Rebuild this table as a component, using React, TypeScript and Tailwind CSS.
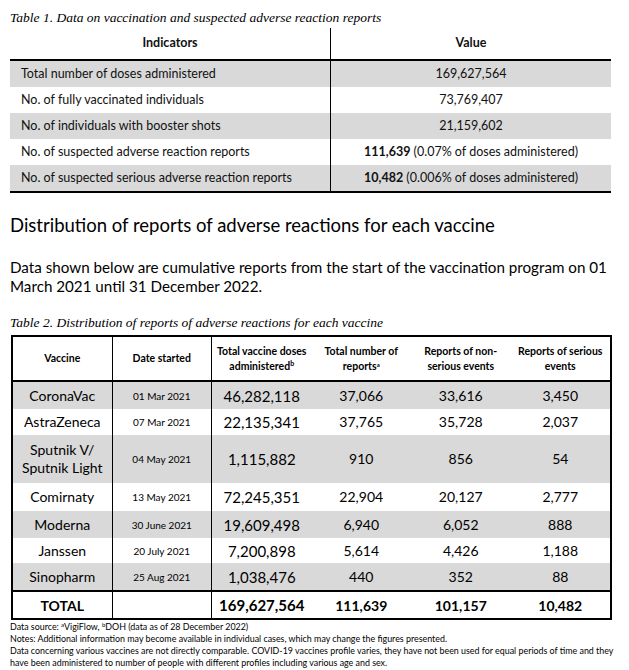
import React from "react";

const sans = { fontFamily: "Lato, 'Open Sans', sans-serif" };

const table1 = [
  { label: "Total number of doses administered", value: <span>169,627,564</span> },
  { label: "No. of fully vaccinated individuals", value: <span>73,769,407</span> },
  { label: "No. of individuals with booster shots", value: <span>21,159,602</span> },
  {
    label: "No. of suspected adverse reaction reports",
    value: (
      <span>
        <b>111,639</b> (0.07% of doses administered)
      </span>
    ),
  },
  {
    label: "No. of suspected serious adverse reaction reports",
    value: (
      <span>
        <b>10,482</b> (0.006% of doses administered)
      </span>
    ),
  },
];

const table2 = [
  { name: "CoronaVac", date: "01 Mar 2021", doses: "46,282,118", total: "37,066", non: "33,616", serious: "3,450", h: "h-[27px]" },
  { name: "AstraZeneca", date: "07 Mar 2021", doses: "22,135,341", total: "37,765", non: "35,728", serious: "2,037", h: "h-[26px]" },
  { name: "Sputnik V/\nSputnik Light", date: "04 May 2021", doses: "1,115,882", total: "910", non: "856", serious: "54", h: "h-[48px]" },
  { name: "Comirnaty", date: "13 May 2021", doses: "72,245,351", total: "22,904", non: "20,127", serious: "2,777", h: "h-[28px]" },
  { name: "Moderna", date: "30 June 2021", doses: "19,609,498", total: "6,940", non: "6,052", serious: "888", h: "h-[27px]" },
  { name: "Janssen", date: "20 July 2021", doses: "7,200,898", total: "5,614", non: "4,426", serious: "1,188", h: "h-[25px]" },
  { name: "Sinopharm", date: "25 Aug 2021", doses: "1,038,476", total: "440", non: "352", serious: "88", h: "h-[27px]" },
];

function Caption({ children }: { children: React.ReactNode }) {
  return (
    <div
      className="text-[13.5px] italic leading-[16px] text-black"
      style={{ fontFamily: "'Liberation Serif', serif" }}
    >
      {children}
    </div>
  );
}

export default function App() {
  return (
    <div className="min-h-[670px] w-[629px] bg-white pl-[10px] pt-[10px] text-[#111]" style={sans}>
      <Caption>Table 1. Data on vaccination and suspected adverse reaction reports</Caption>

      {/* table 1 */}
      <div className="mt-[2px] grid w-[601px] grid-cols-[321px_280px] text-[12.5px]">
        <div className="flex h-[31px] items-center justify-center border-r border-black font-bold">Indicators</div>
        <div className="flex h-[31px] items-center justify-center font-bold">Value</div>
        <div className="col-span-2 border-t-2 border-black" />
        {table1.map((r, i) => (
          <React.Fragment key={r.label}>
            <div className={`flex h-[26px] items-center border-r border-black pl-[11px] ${i % 2 === 0 ? "bg-[#d9d9d9]" : ""}`}>
              {r.label}
            </div>
            <div className={`flex h-[26px] items-center justify-center ${i % 2 === 0 ? "bg-[#d9d9d9]" : ""}`}>{r.value}</div>
          </React.Fragment>
        ))}
        <div className="col-span-2 border-t-2 border-black" />
      </div>

      <h2 className="mt-[20px] text-[18.5px] leading-[24px] text-black">
        Distribution of reports of adverse reactions for each vaccine
      </h2>

      <p className="mt-[21px] w-[605px] text-[15.2px] leading-[19px] text-black">
        Data shown below are cumulative reports from the start of the vaccination program on 01 March 2021 until 31
        December 2022.
      </p>

      <div className="mt-[19px]">
        <Caption>Table 2. Distribution of reports of adverse reactions for each vaccine</Caption>
      </div>

      {/* table 2 */}
      <div className="ml-px mt-[4px] w-[601px] border-2 border-black text-black">
        <div className="grid h-[45px] grid-cols-6 border-b-2 border-black text-[10.5px] font-bold leading-[15px]">
          <div className="flex items-center justify-center border-r border-black">Vaccine</div>
          <div className="flex items-center justify-center border-r border-black">Date started</div>
          <div className="flex items-center justify-center text-center">
            <span>
              Total vaccine doses
              <br />
              administered<sup className="text-[7px]">b</sup>
            </span>
          </div>
          <div className="flex items-center justify-center text-center">
            <span>
              Total number of
              <br />
              reports<sup className="text-[6px]">a</sup>
            </span>
          </div>
          <div className="flex items-center justify-center text-center">
            <span>
              Reports of non-
              <br />
              serious events
            </span>
          </div>
          <div className="flex items-center justify-center text-center">
            <span>
              Reports of serious
              <br />
              events
            </span>
          </div>
        </div>

        {table2.map((r, i) => (
          <div
            key={r.name}
            className={`grid grid-cols-6 text-[14px] leading-[18px] ${r.h} ${i % 2 === 0 ? "bg-[#d9d9d9]" : ""}`}
          >
            <div className="flex items-center justify-center whitespace-pre-line border-r border-black text-center">
              {r.name}
            </div>
            <div className="flex items-center justify-center border-r border-black text-[10px]">{r.date}</div>
            <div className="flex items-center justify-center text-[15px]">{r.doses}</div>
            <div className="flex items-center justify-center">{r.total}</div>
            <div className="flex items-center justify-center">{r.non}</div>
            <div className="flex items-center justify-center">{r.serious}</div>
          </div>
        ))}

        <div className="grid h-[28px] grid-cols-6 border-t-2 border-black text-[14px] font-bold">
          <div className="flex items-center justify-center border-r border-black">TOTAL</div>
          <div className="border-r border-black" />
          <div className="flex items-center justify-center text-[15px]">169,627,564</div>
          <div className="flex items-center justify-center">111,639</div>
          <div className="flex items-center justify-center">101,157</div>
          <div className="flex items-center justify-center">10,482</div>
        </div>
      </div>

      <div className="mt-[1px] w-[605px] text-[8.9px] leading-[12px] text-black">
        <div>
          Data source: <sup className="text-[6px]">a</sup>VigiFlow, <sup className="text-[6px]">b</sup>DOH (data as of 28
          December 2022)
        </div>
        <div>Notes: Additional information may become available in individual cases, which may change the figures presented.</div>
        <div>
          Data concerning various vaccines are not directly comparable. COVID-19 vaccines profile varies, they have not
          been used for equal periods of time and they have been administered to number of people with different
          profiles including various age and sex.
        </div>
      </div>
    </div>
  );
}
